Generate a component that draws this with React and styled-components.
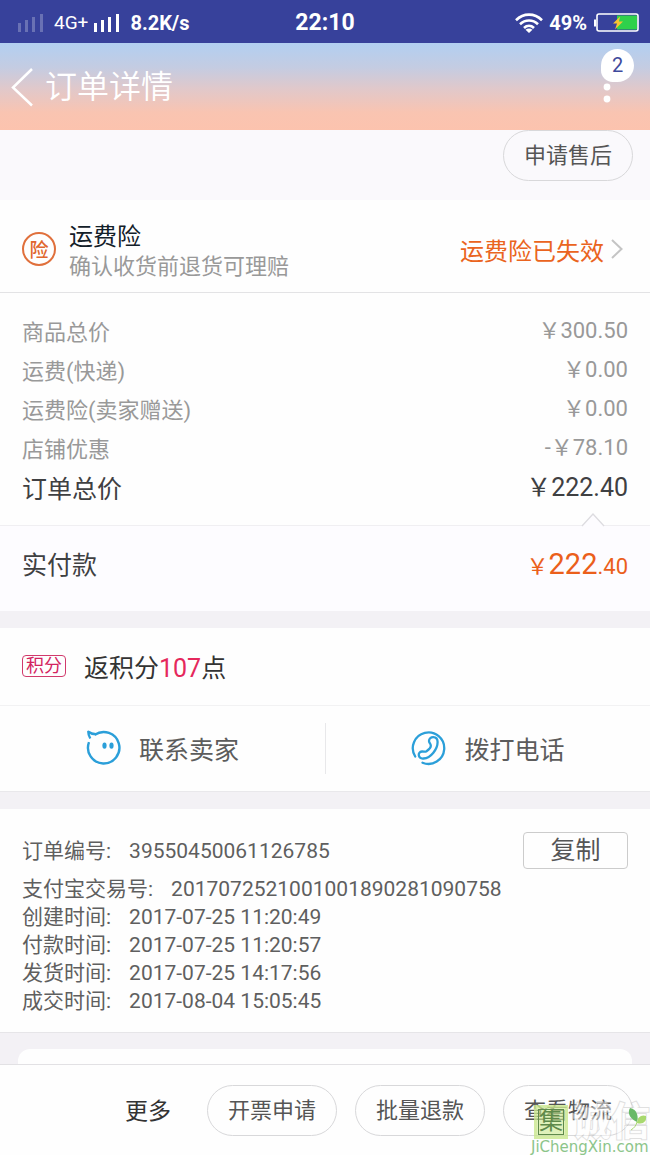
import React from 'react';
import styled, { createGlobalStyle } from 'styled-components';

const GlobalStyle = createGlobalStyle`
  * {
    box-sizing: border-box;
  }

  body {
    margin: 0;
    background: #f3f1f5;
    color: #666;
    font-family: Roboto, 'Noto Sans CJK SC', sans-serif;
    font-size: 22px;
  }

  button {
    padding: 0;
    border: none;
    background: none;
    color: inherit;
    font: inherit;
    cursor: pointer;
  }

  svg {
    display: block;
    flex: none;
  }
`;

const Page = styled.div`
  display: flex;
  flex-direction: column;
  min-height: 100vh;
`;

const StatusBar = styled.div`
  display: grid;
  grid-template-columns: 1fr auto 1fr;
  align-items: center;
  height: 43px;
  padding: 2px 11px 0;
  background: #37419b;
  color: #fff;
  font-size: 20px;
  font-weight: 700;
`;

const StatusGroup = styled.div`
  display: flex;
  align-items: center;
  justify-content: ${(props) => (props.$end ? 'flex-end' : 'flex-start')};
  gap: ${(props) => (props.$end ? '6px' : '10px')};
  padding-left: 7px;
`;

const Network = styled.span`
  display: flex;
  align-items: center;
  gap: 6px;
  font-size: 19px;
  font-weight: 400;
`;

const Clock = styled.time`
  font-size: 23px;
`;

const Header = styled.header`
  display: flex;
  align-items: center;
  justify-content: space-between;
  height: 87px;
  padding: 0 16px 0 10px;
  background: linear-gradient(to bottom, #b2cff1 0%, #c4cce2 28%, #e2c8c9 54%, #f9c4b1 80%, #fcc3ae 100%);
  color: #fff;
`;

const BackButton = styled.button`
  display: flex;
  align-items: center;
  gap: 10px;
`;

const Title = styled.h1`
  margin: 0;
  font-size: 32px;
  font-weight: 350;
  line-height: 40px;
`;

const MenuButton = styled.button`
  display: flex;
  flex-direction: column;
  height: 76px;
`;

const Badge = styled.span`
  display: flex;
  align-items: center;
  justify-content: center;
  width: 33px;
  height: 33px;
  border-radius: 17px 17px 17px 12px;
  background: #fff;
  color: #3f4a9c;
  font-size: 20px;
`;

const Dots = styled.svg`
  margin-left: 2px;
`;

const ServiceBar = styled.div`
  display: flex;
  justify-content: flex-end;
  height: 70px;
  padding: 0 17px;
  background: #faf9fc;
`;

const PillButton = styled.button`
  width: 130px;
  height: 51px;
  padding-bottom: 5px;
  border: 1px solid #d8d8da;
  border-radius: 26px;
  color: #555;
  font-size: 22px;
`;

const Insurance = styled.a`
  display: flex;
  align-items: center;
  height: 93px;
  padding: 6px 27px 0 22px;
  border-bottom: 1px solid #e3e3e5;
  background: #fefefe;
  color: #ea6420;
  font-size: 24px;
  text-decoration: none;
`;

const InsuranceMark = styled.span`
  display: flex;
  align-items: center;
  justify-content: center;
  width: 34px;
  height: 34px;
  margin-right: 13px;
  padding-bottom: 2px;
  border: 2px solid #e0703c;
  border-radius: 50%;
  color: #e0662e;
  font-size: 19px;
  font-weight: 500;
`;

const InsuranceText = styled.span`
  flex: 1;
  padding-top: 6px;
  color: #999;
  font-size: 22px;
  line-height: 30px;
`;

const InsuranceName = styled.strong`
  display: block;
  color: #132029;
  font-size: 24px;
  font-weight: 400;
`;

const InsuranceState = styled.span`
  margin-right: 7px;
`;

const Prices = styled.dl`
  margin: 0;
  padding: 20px 22px 14px;
  background: #fefefe;
`;

const PriceRow = styled.div`
  display: flex;
  justify-content: space-between;
  height: ${(props) => (props.$total ? '42px' : '39px')};
  color: ${(props) => (props.$total ? '#3f4042' : '#999')};
  font-size: ${(props) => (props.$total ? '25px' : '22px')};
  line-height: ${(props) => (props.$total ? '42px' : '39px')};

  dd {
    margin: 0;
    line-height: ${(props) => (props.$total ? '38px' : '35px')};
  }
`;

const Paid = styled.div`
  position: relative;
  display: flex;
  justify-content: space-between;
  height: 86px;
  padding: 0 22px;
  border-top: 1px solid #f0eff2;
  background: #fdfcff;
  color: #3f4042;
  font-size: 25px;
  line-height: 80px;
`;

const Notch = styled.svg`
  position: absolute;
  top: -13px;
  right: 45px;
`;

const Amount = styled.span`
  color: #eb5f1b;
  font-size: 22px;
  line-height: 76px;
`;

const AmountMain = styled.span`
  font-size: 29px;
`;

const Points = styled.section`
  display: flex;
  align-items: center;
  gap: 18px;
  height: 78px;
  margin-top: 17px;
  padding: 0 22px 2px;
  border-bottom: 1px solid #f2f2f3;
  background: #fefefe;
  color: #333;
  font-size: 25px;
`;

const PointsTag = styled.span`
  padding: 0 3px;
  border: 1px solid #d13a6c;
  border-radius: 4px;
  color: #d3235f;
  font-size: 18px;
  line-height: 20px;
`;

const PointsValue = styled.span`
  color: #e5285c;
`;

const Contacts = styled.section`
  display: grid;
  grid-template-columns: 1fr 1fr;
  height: 86px;
  padding: 17px 0;
  border-bottom: 1px solid #e9e8eb;
  background: #fefefe;
`;

const ContactButton = styled.button`
  display: flex;
  align-items: center;
  justify-content: center;
  gap: 18px;
  padding-bottom: 2px;
  color: #5c5c5c;
  font-size: 25px;

  & + & {
    border-left: 1px solid #e8e8ea;
  }
`;

const Details = styled.section`
  display: flex;
  align-items: flex-start;
  justify-content: space-between;
  margin-top: 17px;
  padding: 23px 22px 17px;
  border-bottom: 1px solid #e6e5e8;
  background: #fefefe;
`;

const DetailList = styled.dl`
  margin: 0;
  color: #5f5f5f;
  font-size: 21px;
`;

const DetailRow = styled.div`
  display: flex;
  gap: 18px;
  line-height: 28px;
  white-space: nowrap;

  &:first-child {
    margin: 5px 0 10px;
  }

  dd {
    margin: 0;
  }
`;

const CopyButton = styled.button`
  flex: none;
  width: 105px;
  height: 37px;
  border: 1px solid #ccc;
  border-radius: 4px;
  color: #555;
  font-size: 25px;
  line-height: 36px;
`;

const NextCard = styled.div`
  flex: 1;
  min-height: 14px;
  margin: 16px 18px 0;
  border-radius: 12px 12px 0 0;
  background: #fefefe;
`;

const Footer = styled.footer`
  position: relative;
  display: flex;
  align-items: center;
  justify-content: flex-end;
  gap: 18px;
  height: 91px;
  padding: 0 17px;
  border-top: 1px solid #e2e1e4;
  background: #fefefe;
`;

const MoreButton = styled.button`
  margin-right: 18px;
  padding-bottom: 3px;
  color: #333;
  font-size: 23px;
`;

const Watermark = styled.div`
  position: absolute;
  right: 0;
  bottom: 0;
  pointer-events: none;
`;

const WatermarkName = styled.div`
  display: flex;
  align-items: center;
  gap: 4px;
  font-size: 39px;
  line-height: 36px;
`;

const WatermarkWord = styled.span`
  color: #fff;
  font-weight: 700;
  opacity: 0.5;
  paint-order: stroke fill;
  -webkit-text-stroke: 2px #c4c4c4;
`;

const WatermarkSeal = styled.span`
  width: 34px;
  height: 34px;
  margin-left: 3px;
  border: 3px solid rgba(201, 232, 140, 0.5);
  outline: 1px solid #5f8a4a;
  outline-offset: -5px;
  background: rgba(201, 232, 140, 0.6);
  color: #5f8a4a;
  font-size: 24px;
  line-height: 27px;
  text-align: center;
`;

const WatermarkSite = styled.div`
  color: #8cc58a;
  font-family: 'DejaVu Sans', sans-serif;
  font-size: 15px;
  line-height: 15px;
`;

const Leaf = styled.svg`
  position: absolute;
  top: 3px;
  right: 3px;
`;

const prices = [
  { label: '商品总价', value: '\uFFE5300.50' },
  { label: '运费(快递)', value: '\uFFE50.00' },
  { label: '运费险(卖家赠送)', value: '\uFFE50.00' },
  { label: '店铺优惠', value: '-\uFFE578.10' },
  { label: '订单总价', value: '\uFFE5222.40', total: true },
];

const details = [
  { label: '订单编号:', value: '39550450061126785' },
  { label: '支付宝交易号:', value: '2017072521001001890281090758' },
  { label: '创建时间:', value: '2017-07-25 11:20:49' },
  { label: '付款时间:', value: '2017-07-25 11:20:57' },
  { label: '发货时间:', value: '2017-07-25 14:17:56' },
  { label: '成交时间:', value: '2017-08-04 15:05:45' },
];

const Signal = ({ opacity = 1 }) => (
  <svg width="26" height="18" viewBox="0 0 26 18" fill="#fff" opacity={opacity}>
    <rect x="0" y="9" width="3" height="9" />
    <rect x="7" y="6" width="3" height="12" />
    <rect x="14" y="3" width="3" height="15" />
    <rect x="22" y="0" width="3" height="18" />
  </svg>
);

const WifiIcon = () => (
  <svg width="28" height="20" viewBox="0 0 28 20" fill="none" stroke="#fff" strokeWidth="2.6">
    <path d="M1 7.2C8.5-.2 19.5-.2 27 7.2" />
    <path d="M5 11.3c5.2-5 12.8-5 18 0" />
    <path d="M9 15c3-2.8 7-2.8 10 0" />
    <path d="M10.5 16.8c2.2-1.6 4.8-1.6 7 0L14 20z" fill="#fff" stroke="none" />
  </svg>
);

const BatteryIcon = () => (
  <svg width="46" height="20" viewBox="0 0 46 20">
    <path d="M2 6.5v7" stroke="#fff" strokeWidth="2" />
    <rect x="4" y="1" width="41" height="17" rx="2" fill="none" stroke="#fff" strokeWidth="1.6" />
    <rect x="24" y="2.5" width="20" height="14" fill="#2fd14b" />
    <path d="M27 3.5l-7 7h4l-2 6 8-8h-4z" fill="#f5c431" />
  </svg>
);

const SellerIcon = () => (
  <svg width="35" height="36" viewBox="0 0 35 36" fill="none" stroke="#2b9fd9" strokeWidth="2.4">
    <path d="M8.8 4.8A15.7 15.7 0 1 1 3 12.2" />
    <path d="M10 4.2C7 4.2 4.5 3.6 2.3 1.8c0 2.5.6 4.4 2 6.7" strokeLinejoin="round" />
    <ellipse cx="18.5" cy="15.6" rx="2.1" ry="3.2" fill="#2b9fd9" stroke="none" />
    <ellipse cx="25.5" cy="15.6" rx="2.1" ry="3.2" fill="#2b9fd9" stroke="none" />
  </svg>
);

const PhoneIcon = () => (
  <svg width="35" height="36" viewBox="0 0 35 36" fill="none" stroke="#2b9fd9" strokeWidth="2.3" strokeLinecap="round">
    <path d="M4.2 26.5A15.7 15.7 0 1 1 11.5 32.7" />
    <path d="M18 11c0-5 8.5-5.5 8.6 1C26.6 19 20 28 12.5 28.5c-5.5.5-6.5-6.5-1.5-7 2-.2 2.8.8 4.5-.3 2.5-1.7 4.5-3.6 4.3-5.7-.1-1.7-1.8-2.5-1.800-4.500z" />
  </svg>
);

const App = () => {
  return (
    <Page>
      <GlobalStyle />
      <StatusBar>
        <StatusGroup>
          <Signal opacity={0.25} />
          <Network>
            4G+
            <Signal />
          </Network>
          <span>8.2K/s</span>
        </StatusGroup>
        <Clock>22:10</Clock>
        <StatusGroup $end>
          <WifiIcon />
          <span>49%</span>
          <BatteryIcon />
        </StatusGroup>
      </StatusBar>

      <Header>
        <BackButton aria-label="返回">
          <svg width="25" height="42" viewBox="0 0 25 42" fill="none" stroke="#fff" strokeWidth="2.5">
            <path d="M22 3L3 21.5 22 39.5" />
          </svg>
          <Title>订单详情</Title>
        </BackButton>
        <MenuButton aria-label="菜单">
          <Badge>2</Badge>
          <Dots width="8" height="22" viewBox="0 0 8 22" fill="#fff">
            <circle cx="4" cy="5" r="3.4" />
            <circle cx="4" cy="17" r="3.4" />
          </Dots>
        </MenuButton>
      </Header>

      <ServiceBar>
        <PillButton>申请售后</PillButton>
      </ServiceBar>

      <Insurance href="#">
        <InsuranceMark>险</InsuranceMark>
        <InsuranceText>
          <InsuranceName>运费险</InsuranceName>
          确认收货前退货可理赔
        </InsuranceText>
        <InsuranceState>运费险已失效</InsuranceState>
        <svg width="12" height="20" viewBox="0 0 12 20" fill="none" stroke="#c4c4c4" strokeWidth="2">
          <path d="M1 1l9.5 9L1 19" />
        </svg>
      </Insurance>

      <Prices>
        {prices.map((item) => (
          <PriceRow key={item.label} $total={item.total}>
            <dt>{item.label}</dt>
            <dd>{item.value}</dd>
          </PriceRow>
        ))}
      </Prices>
      <Paid>
        <Notch width="24" height="14" viewBox="0 0 24 14">
          <path d="M1 13L12 1l11 12" fill="#fdfcff" stroke="#dddce0" strokeWidth="1.3" />
        </Notch>
        <span>实付款</span>
        <Amount>
          {'\uFFE5'}
          <AmountMain>222</AmountMain>.40
        </Amount>
      </Paid>

      <Points>
        <PointsTag>积分</PointsTag>
        <span>
          返积分<PointsValue>107</PointsValue>点
        </span>
      </Points>

      <Contacts>
        <ContactButton>
          <SellerIcon />
          联系卖家
        </ContactButton>
        <ContactButton>
          <PhoneIcon />
          拨打电话
        </ContactButton>
      </Contacts>

      <Details>
        <DetailList>
          {details.map((item) => (
            <DetailRow key={item.label}>
              <dt>{item.label}</dt>
              <dd>{item.value}</dd>
            </DetailRow>
          ))}
        </DetailList>
        <CopyButton>复制</CopyButton>
      </Details>

      <NextCard />

      <Footer>
        <MoreButton>更多</MoreButton>
        <PillButton>开票申请</PillButton>
        <PillButton>批量退款</PillButton>
        <PillButton>查看物流</PillButton>
        <Watermark>
          <WatermarkName>
            <WatermarkSeal>集</WatermarkSeal>
            <WatermarkWord>诚信</WatermarkWord>
          </WatermarkName>
          <WatermarkSite>JiChengXin.com</WatermarkSite>
          <Leaf width="19" height="24" viewBox="0 0 19 24">
            <path d="M9 15C2 12-1 6 2 1c6 1 9 7 7 14z" fill="#69b967" />
            <path d="M9 16c0-6 5-9 9-7 1 5-3 9-9 7z" fill="#a8d96f" />
            <path d="M9 15c-1 4-3 6-6 8" fill="none" stroke="#a8d96f" />
          </Leaf>
        </Watermark>
      </Footer>
    </Page>
  );
};

export default App;
